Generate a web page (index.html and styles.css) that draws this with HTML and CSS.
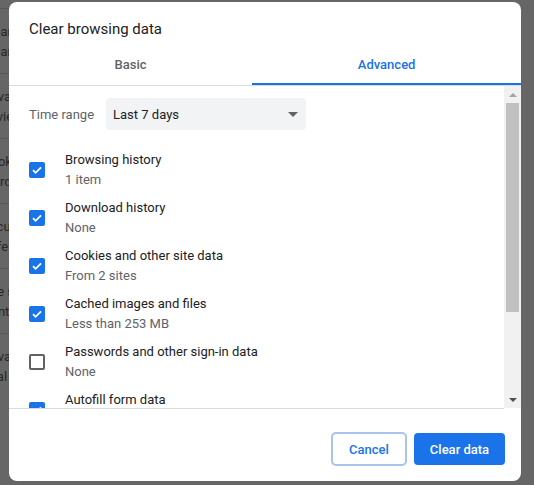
FILE: index.html
```html
<!DOCTYPE html>
<html lang="en">
<head>
    <meta charset="UTF-8">
    <meta name="viewport" content="width=device-width, initial-scale=1.0">
    <title>Clear browsing data</title>
    <link rel="stylesheet" href="styles.css">
</head>
<body>
    <div class="page">
        <div class="page-row">
            <div class="page-title">Clear browsing data</div>
            <div class="page-sub">Clear history, cookies, cache, and more</div>
        </div>
        <div class="page-row">
            <div class="page-title">Privacy Guide</div>
            <div class="page-sub">Review key privacy and security controls</div>
        </div>
        <div class="page-row">
            <div class="page-title">Cookies and other site data</div>
            <div class="page-sub">Third-party cookies are blocked in Incognito mode</div>
        </div>
        <div class="page-row">
            <div class="page-title">Security</div>
            <div class="page-sub">Safe Browsing (protection from dangerous sites)</div>
        </div>
        <div class="page-row">
            <div class="page-title">Site settings</div>
            <div class="page-sub">Controls what information sites can use and show</div>
        </div>
        <div class="page-row">
            <div class="page-title">Privacy Sandbox</div>
            <div class="page-sub">Trial features are off</div>
        </div>
    </div>

    <div class="backdrop"></div>

    <div class="dialog">
        <h1 class="dialog-title">Clear browsing data</h1>
        <div class="tabs">
            <div class="tab">Basic</div>
            <div class="tab active">Advanced</div>
        </div>

        <div class="dialog-body">
            <div class="scroll-content">
                <div class="time-range">
                    <span class="time-label">Time range</span>
                    <div class="select">
                        <span>Last 7 days</span>
                        <span class="select-arrow"></span>
                    </div>
                </div>
                <ul class="options">
                    <li class="option">
                        <span class="checkbox checked"><svg viewBox="0 0 16 16" width="16" height="16"><path d="M4 8.2l2.6 2.6L12 5.4" fill="none" stroke="#fff" stroke-width="1.8"/></svg></span>
                        <div class="option-text">
                            <div class="option-label">Browsing history</div>
                            <div class="option-sub">1 item</div>
                        </div>
                    </li>
                    <li class="option">
                        <span class="checkbox checked"><svg viewBox="0 0 16 16" width="16" height="16"><path d="M4 8.2l2.6 2.6L12 5.4" fill="none" stroke="#fff" stroke-width="1.8"/></svg></span>
                        <div class="option-text">
                            <div class="option-label">Download history</div>
                            <div class="option-sub">None</div>
                        </div>
                    </li>
                    <li class="option">
                        <span class="checkbox checked"><svg viewBox="0 0 16 16" width="16" height="16"><path d="M4 8.2l2.6 2.6L12 5.4" fill="none" stroke="#fff" stroke-width="1.8"/></svg></span>
                        <div class="option-text">
                            <div class="option-label">Cookies and other site data</div>
                            <div class="option-sub">From 2 sites</div>
                        </div>
                    </li>
                    <li class="option">
                        <span class="checkbox checked"><svg viewBox="0 0 16 16" width="16" height="16"><path d="M4 8.2l2.6 2.6L12 5.4" fill="none" stroke="#fff" stroke-width="1.8"/></svg></span>
                        <div class="option-text">
                            <div class="option-label">Cached images and files</div>
                            <div class="option-sub">Less than 253 MB</div>
                        </div>
                    </li>
                    <li class="option">
                        <span class="checkbox"></span>
                        <div class="option-text">
                            <div class="option-label">Passwords and other sign-in data</div>
                            <div class="option-sub">None</div>
                        </div>
                    </li>
                    <li class="option">
                        <span class="checkbox checked"><svg viewBox="0 0 16 16" width="16" height="16"><path d="M4 8.2l2.6 2.6L12 5.4" fill="none" stroke="#fff" stroke-width="1.8"/></svg></span>
                        <div class="option-text">
                            <div class="option-label">Autofill form data</div>
                            <div class="option-sub">None</div>
                        </div>
                    </li>
                </ul>
            </div>
            <div class="scrollbar">
                <div class="scroll-btn"><span class="arrow-up"></span></div>
                <div class="scroll-thumb"></div>
                <div class="scroll-track"></div>
                <div class="scroll-btn"><span class="arrow-down"></span></div>
            </div>
        </div>

        <div class="dialog-footer">
            <button type="button" class="btn btn-cancel">Cancel</button>
            <button type="button" class="btn btn-primary">Clear data</button>
        </div>
    </div>
</body>
</html>
```

FILE: styles.css
```css
body {
    font-family: Roboto, "Liberation Sans", Arial, sans-serif;
    margin: 0;
    padding: 0;
    background-color: white;
    color: #202124;
    overflow: hidden;
}
/* settings page behind the dialog, only its left edge shows */
.page {
    width: 30px;
    overflow: hidden;
    padding-top: 8px;
    font-size: 13px;
    line-height: 20px;
    color: #5f6368;
}
.page-row {
    margin-left: -18px;
    padding: 13px 0 11px;
    border-top: 1px solid #dadce0;
    white-space: nowrap;
}
.backdrop {
    position: absolute;
    top: 0;
    left: 0;
    right: 0;
    bottom: 0;
    background: rgba(0, 0, 0, 0.6);
}
.dialog {
    position: absolute;
    top: 2px;
    left: 9px;
    width: 512px;
    height: 479px;
    background: white;
    border-radius: 8px;
    display: flex;
    flex-direction: column;
    overflow: hidden;
}
.dialog-title {
    margin: 0;
    padding: 17px 20px 0;
    font-size: 15px;
    font-weight: 400;
    line-height: 20px;
    color: #202124;
}
.tabs {
    display: flex;
    border-bottom: 1px solid #dadce0;
}
.tab {
    flex: 1 1 auto;
    text-align: center;
    padding: 18px 0 10px;
    font-size: 13px;
    font-weight: 500;
    line-height: 16px;
    color: #5f6368;
    border-bottom: 2px solid transparent;
}
.tab.active {
    color: #1a73e8;
    border-bottom-color: #1a73e8;
}
.dialog-body {
    display: flex;
    height: 323px;
}
.scroll-content {
    flex: 1;
    height: 323px;
    overflow: hidden;
    padding: 12px 0 0 20px;
    box-sizing: border-box;
    border-bottom: 1px solid #dadce0;
}
.time-range {
    display: flex;
    align-items: center;
    font-size: 13px;
}
.time-label {
    color: #5f6368;
    margin-right: 12px;
}
.select {
    width: 200px;
    height: 32px;
    box-sizing: border-box;
    padding: 0 8px 0 7px;
    background: #f1f3f4;
    border-radius: 4px;
    display: flex;
    align-items: center;
    justify-content: space-between;
    color: #202124;
}
.select-arrow {
    width: 0;
    height: 0;
    border-left: 5px solid transparent;
    border-right: 5px solid transparent;
    border-top: 5px solid #5f6368;
}
.options {
    list-style: none;
    margin: 16px 0 0;
    padding: 0;
}
.option {
    display: flex;
    align-items: center;
    padding: 4px 0;
    font-size: 13px;
    line-height: 20px;
}
.checkbox {
    width: 16px;
    height: 16px;
    box-sizing: border-box;
    border: 2px solid #5f6368;
    border-radius: 2px;
    margin-right: 20px;
    flex-shrink: 0;
}
.checkbox.checked {
    border: none;
    background: #1a73e8;
}
.checkbox svg {
    display: block;
}
.option-label {
    color: #202124;
}
.option-sub {
    color: #5f6368;
}
/* classic scrollbar */
.scrollbar {
    width: 17px;
    height: 322px;
    background: #f1f1f1;
    display: flex;
    flex-direction: column;
}
.scroll-btn {
    height: 17px;
    display: flex;
    align-items: center;
    justify-content: center;
}
.arrow-up {
    width: 0;
    height: 0;
    border-left: 4px solid transparent;
    border-right: 4px solid transparent;
    border-bottom: 4px solid #a3a3a3;
}
.arrow-down {
    width: 0;
    height: 0;
    border-left: 4px solid transparent;
    border-right: 4px solid transparent;
    border-top: 4px solid #505050;
}
.scroll-thumb {
    height: 209px;
    margin: 0 2px;
    background: #c1c1c1;
}
.scroll-track {
    flex: 1;
}
.dialog-footer {
    display: flex;
    justify-content: flex-end;
    align-items: center;
    gap: 7px;
    padding: 23px 16px 15px;
}
.btn {
    font-family: inherit;
    font-size: 13px;
    font-weight: 500;
    border-radius: 4px;
    cursor: pointer;
}
.btn-cancel {
    width: 76px;
    height: 34px;
    background: white;
    color: #1a73e8;
    border: 2px solid #aac3ec;
    border-radius: 5px;
}
.btn-primary {
    width: 91px;
    height: 32px;
    background: #1a73e8;
    color: white;
    border: none;
}
```
